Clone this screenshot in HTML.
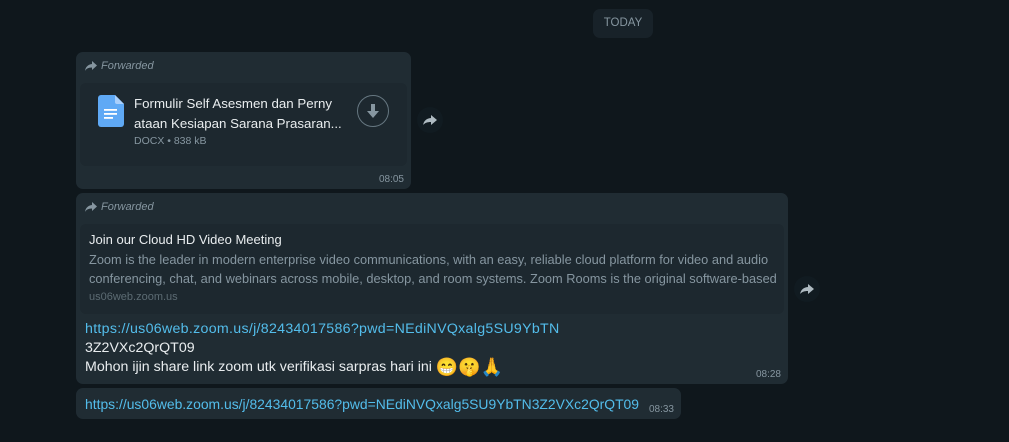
<!DOCTYPE html>
<html><head><meta charset="utf-8"><style>
body{margin:0;width:1009px;height:442px;background:#0f171c;font-family:"Liberation Sans",sans-serif;position:relative;overflow:hidden;color:#e9edef}
.b{position:absolute;background:#202c33;border-radius:7px}
.fw{position:absolute;left:9px;font-size:11px;font-style:italic;color:#8696a0}
.fw svg{vertical-align:-2px;margin-right:4px}
.t{position:absolute;font-size:10px;color:#8696a0}
.sh{position:absolute;width:26px;height:26px;border-radius:50%;background:#111b21}
a{color:#53bdeb;text-decoration:none}
.em{font-size:18px;vertical-align:-2px}
</style></head><body>
<div style="position:absolute;left:593px;top:9px;width:60px;height:29px;background:#182229;border-radius:7px;font-size:11.5px;color:#8696a0;text-align:center;line-height:29px">TODAY</div>

<div class="b" style="left:76px;top:52px;width:335px;height:137px">
 <div class="fw" style="top:8px"><svg width="12" height="10" viewBox="0 0 12 10"><path d="M7 0l5 4.5L7 9V6.5C3 6.5 1 8 0 10 0.5 6 3 3.5 7 3z" fill="#8696a0"/></svg>Forwarded</div>
 <div style="position:absolute;left:4px;top:31px;width:327px;height:83px;background:#1d282f;border-radius:6px">
  <svg style="position:absolute;left:18px;top:12px" width="26" height="32" viewBox="0 0 26 32"><path d="M3 0h14l9 9v20a3 3 0 0 1-3 3H3a3 3 0 0 1-3-3V3a3 3 0 0 1 3-3z" fill="#5fa9f5"/><path d="M17 0v7a2 2 0 0 0 2 2h7z" fill="#a9cffb"/><rect x="6" y="14" width="13" height="1.8" fill="#fff"/><rect x="6" y="18" width="13" height="1.8" fill="#fff"/><rect x="6" y="22" width="9" height="1.8" fill="#fff"/></svg>
  <div style="position:absolute;left:54px;top:11px;font-size:13.3px;line-height:20px;color:#e9edef">Formulir Self Asesmen dan Perny<br>ataan Kesiapan Sarana Prasaran...</div>
  <div style="position:absolute;left:54px;top:52px;font-size:10.5px;color:#8696a0">DOCX • 838 kB</div>
  <div style="position:absolute;left:277px;top:12px;width:30px;height:30px;border:1.5px solid #667781;border-radius:50%"><svg width="30" height="30" viewBox="0 0 30 30"><path d="M13 8h4v7h4l-6 7-6-7h4z" fill="#8696a0"/></svg></div>
 </div>
 <div class="t" style="right:7px;bottom:4px">08:05</div>
</div>
<div class="sh" style="left:417px;top:107px"><svg width="26" height="26" viewBox="0 0 26 26"><path d="M14 8l6 5-6 5v-3c-4 0-6 1-8 3 1-4 3-6.5 8-7z" fill="#aebac1"/></svg></div>

<div class="b" style="left:76px;top:193px;width:712px;height:191px">
 <div class="fw" style="top:8px"><svg width="12" height="10" viewBox="0 0 12 10"><path d="M7 0l5 4.5L7 9V6.5C3 6.5 1 8 0 10 0.5 6 3 3.5 7 3z" fill="#8696a0"/></svg>Forwarded</div>
 <div style="position:absolute;left:4px;top:31px;width:704px;height:90px;background:#1d282f;border-radius:6px">
  <div style="position:absolute;left:9px;top:8px;font-size:13px;color:#e9edef">Join our Cloud HD Video Meeting</div>
  <div style="position:absolute;left:9px;top:26px;font-size:12.8px;line-height:19px;color:#8696a0;white-space:nowrap">Zoom is the leader in modern enterprise video communications, with an easy, reliable cloud platform for video and audio<br>conferencing, chat, and webinars across mobile, desktop, and room systems. Zoom Rooms is the original software-based</div>
  <div style="position:absolute;left:9px;top:67px;font-size:11px;color:#5c6b73">us06web.zoom.us</div>
 </div>
 <div style="position:absolute;left:9px;top:127px;font-size:14.2px;line-height:19px;white-space:nowrap"><a style="letter-spacing:0.3px">https://us06web.zoom.us/j/82434017586?pwd=NEdiNVQxalg5SU9YbTN</a><br>3Z2VXc2QrQT09<br>Mohon ijin share link zoom utk verifikasi sarpras hari ini <span class="em">😁🤫🙏</span></div>
 <div class="t" style="right:7px;bottom:4px">08:28</div>
</div>
<div class="sh" style="left:794px;top:276px"><svg width="26" height="26" viewBox="0 0 26 26"><path d="M14 8l6 5-6 5v-3c-4 0-6 1-8 3 1-4 3-6.5 8-7z" fill="#aebac1"/></svg></div>

<div class="b" style="left:76px;top:388px;width:605px;height:31px">
 <div style="position:absolute;left:9px;top:8px;font-size:13.9px;white-space:nowrap"><a>https://us06web.zoom.us/j/82434017586?pwd=NEdiNVQxalg5SU9YbTN3Z2VXc2QrQT09</a></div>
 <div class="t" style="right:7px;bottom:4px">08:33</div>
</div>
</body></html>
